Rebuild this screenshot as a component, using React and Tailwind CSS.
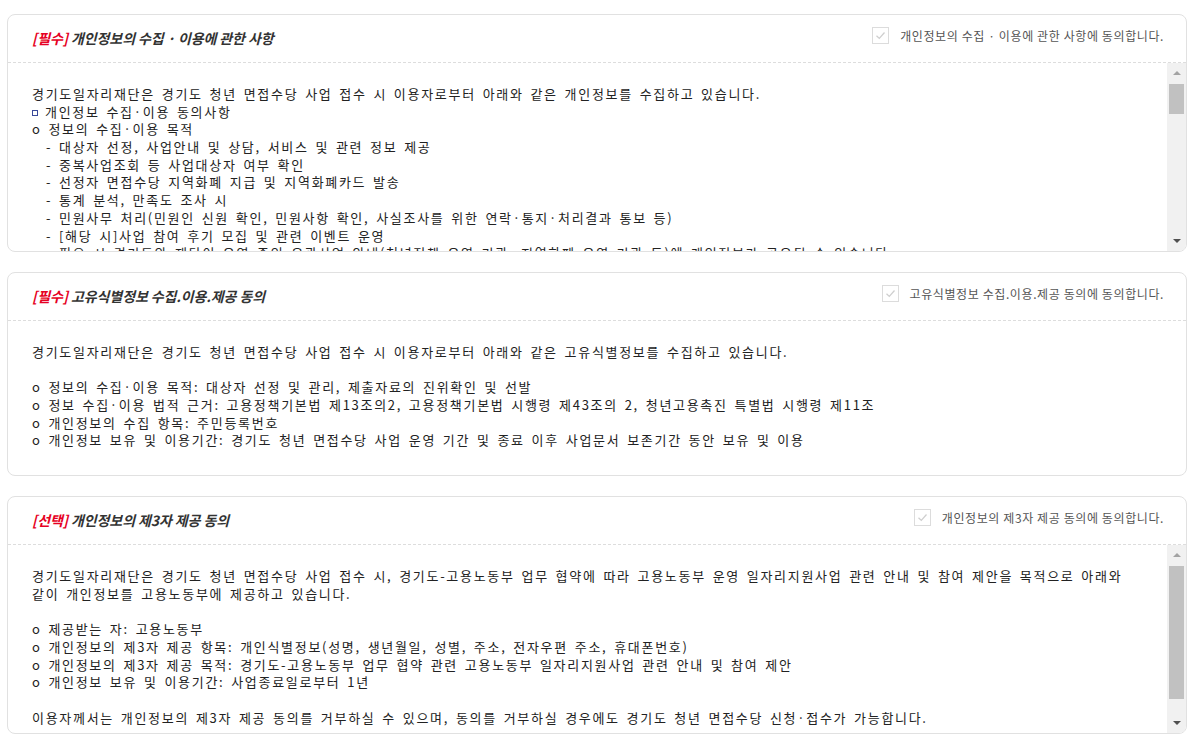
const sections = [
  {
    tag: '[필수]',
    title: '개인정보의 수집 · 이용에 관한 사항',
    agree: '개인정보의 수집 · 이용에 관한 사항에 동의합니다.',
    scroll: { thumbTop: 21, thumbHeight: 30 },
    lines: [
      { t: '경기도일자리재단은 경기도 청년 면접수당 사업 접수 시 이용자로부터 아래와 같은 개인정보를 수집하고 있습니다.' },
      { t: '개인정보 수집·이용 동의사항', box: true },
      { t: 'o 정보의 수집·이용 목적' },
      { t: '- 대상자 선정, 사업안내 및 상담, 서비스 및 관련 정보 제공', indent: true },
      { t: '- 중복사업조회 등 사업대상자 여부 확인', indent: true },
      { t: '- 선정자 면접수당 지역화폐 지급 및 지역화폐카드 발송', indent: true },
      { t: '- 통계 분석, 만족도 조사 시', indent: true },
      { t: '- 민원사무 처리(민원인 신원 확인, 민원사항 확인, 사실조사를 위한 연락·통지·처리결과 통보 등)', indent: true },
      { t: '- [해당 시]사업 참여 후기 모집 및 관련 이벤트 운영', indent: true },
      { t: '- 필요 시 경기도와 재단이 운영 중인 유관사업 안내(청년정책 운영 기관, 지역화폐 운영 기관 등)에 개인정보가 공유될 수 있습니다.', indent: true },
      { t: 'o 수집하는 개인정보의 항목' },
      { t: '- 필수항목: 성명, 생년월일, 성별, 주소, 휴대폰번호, 전자우편 주소', indent: true },
      { t: 'o 개인정보의 보유 및 이용기간' },
      { t: '- 사업 종료 후 5년간 보유 후 파기', indent: true },
    ],
  },
  {
    tag: '[필수]',
    title: '고유식별정보 수집.이용.제공 동의',
    agree: '고유식별정보 수집.이용.제공 동의에 동의합니다.',
    lines: [
      { t: '경기도일자리재단은 경기도 청년 면접수당 사업 접수 시 이용자로부터 아래와 같은 고유식별정보를 수집하고 있습니다.' },
      { t: '' },
      { t: 'o 정보의 수집·이용 목적: 대상자 선정 및 관리, 제출자료의 진위확인 및 선발' },
      { t: 'o 정보 수집·이용 법적 근거: 고용정책기본법 제13조의2, 고용정책기본법 시행령 제43조의 2, 청년고용촉진 특별법 시행령 제11조' },
      { t: 'o 개인정보의 수집 항목: 주민등록번호' },
      { t: 'o 개인정보 보유 및 이용기간: 경기도 청년 면접수당 사업 운영 기간 및 종료 이후 사업문서 보존기간 동안 보유 및 이용' },
    ],
  },
  {
    tag: '[선택]',
    title: '개인정보의 제3자 제공 동의',
    agree: '개인정보의 제3자 제공 동의에 동의합니다.',
    scroll: { thumbTop: 21, thumbHeight: 133 },
    lines: [
      { t: '경기도일자리재단은 경기도 청년 면접수당 사업 접수 시, 경기도-고용노동부 업무 협약에 따라 고용노동부 운영 일자리지원사업 관련 안내 및 참여 제안을 목적으로 아래와' },
      { t: '같이 개인정보를 고용노동부에 제공하고 있습니다.' },
      { t: '' },
      { t: 'o 제공받는 자: 고용노동부' },
      { t: 'o 개인정보의 제3자 제공 항목: 개인식별정보(성명, 생년월일, 성별, 주소, 전자우편 주소, 휴대폰번호)' },
      { t: 'o 개인정보의 제3자 제공 목적: 경기도-고용노동부 업무 협약 관련 고용노동부 일자리지원사업 관련 안내 및 참여 제안' },
      { t: 'o 개인정보 보유 및 이용기간: 사업종료일로부터 1년' },
      { t: '' },
      { t: '이용자께서는 개인정보의 제3자 제공 동의를 거부하실 수 있으며, 동의를 거부하실 경우에도 경기도 청년 면접수당 신청·접수가 가능합니다.' },
    ],
  },
];

function Checkbox() {
  return (
    <span className="flex items-center justify-center w-[17px] h-[17px] border border-[#dcdcdc] bg-white shrink-0">
      <svg width="11" height="9" viewBox="0 0 11 9" fill="none">
        <path d="M1.5 4.8l2.8 2.6L9.5 1.5" stroke="#cfcfcf" strokeWidth="1.3" />
      </svg>
    </span>
  );
}

function Scrollbar({ thumbTop, thumbHeight }) {
  return (
    <div className="relative w-[19px] h-full bg-[#f1f1f1] shrink-0">
      <div className="flex justify-center pt-[8px]">
        <div className="w-0 h-0 border-l-[4px] border-r-[4px] border-b-[4px] border-l-transparent border-r-transparent border-b-[#a3a3a3]" />
      </div>
      <div
        className="absolute left-[2px] right-[2px] bg-[#c1c1c1]"
        style={{ top: thumbTop, height: thumbHeight }}
      />
      <div className="absolute bottom-[8px] left-0 right-0 flex justify-center">
        <div className="w-0 h-0 border-l-[4px] border-r-[4px] border-t-[4px] border-l-transparent border-r-transparent border-t-[#505050]" />
      </div>
    </div>
  );
}

function Line({ line }) {
  if (!line.t) return <div className="h-[17.7px]" />;
  return (
    <div className={`whitespace-nowrap h-[17.7px] leading-[17.7px] flex items-center ${line.indent ? 'pl-[14px]' : ''}`}>
      {line.box && (
        <span className="inline-block w-[6px] h-[6px] border border-[#3a4a9a] mr-[7px] mt-[2px] shrink-0" />
      )}
      <span>{line.t}</span>
    </div>
  );
}

function Section({ s }) {
  const body = 'text-[13px] text-[#222] tracking-[1.7px] [word-spacing:2.2px]';
  return (
    <div className="w-[1180px] border border-[#e1e1e1] rounded-[8px] bg-white overflow-hidden">
      <div className="h-[48px] flex items-center justify-between pl-[24px] pr-[22px] border-b border-dashed border-[#dddddd]">
        <h3 className="text-[14px] font-bold italic text-[#333] tracking-[-0.1px] whitespace-nowrap">
          <span className="text-[#e60023]">{s.tag}</span> {s.title}
        </h3>
        <label className="flex items-center gap-[11px] mb-[6px] text-[12px] tracking-[0.6px] text-[#555] whitespace-nowrap">
          <Checkbox />
          <span>{s.agree}</span>
        </label>
      </div>
      {s.scroll ? (
        <div className="flex h-[188px]">
          <div className={`flex-1 overflow-hidden pl-[24px] pt-[22px] ${body}`}>
            {s.lines.map((l, i) => (
              <Line key={i} line={l} />
            ))}
          </div>
          <Scrollbar {...s.scroll} />
        </div>
      ) : (
        <div className={`pl-[24px] pt-[22px] pb-[26px] ${body}`}>
          {s.lines.map((l, i) => (
            <Line key={i} line={l} />
          ))}
        </div>
      )}
    </div>
  );
}

export default function App() {
  return (
    <div
      className="min-h-screen bg-white pt-[14px] pl-[7px] flex flex-col gap-[20px]"
      style={{ fontFamily: '"Noto Sans CJK KR", "Noto Sans", sans-serif' }}
    >
      {sections.map((s, i) => (
        <Section key={i} s={s} />
      ))}
    </div>
  );
}
